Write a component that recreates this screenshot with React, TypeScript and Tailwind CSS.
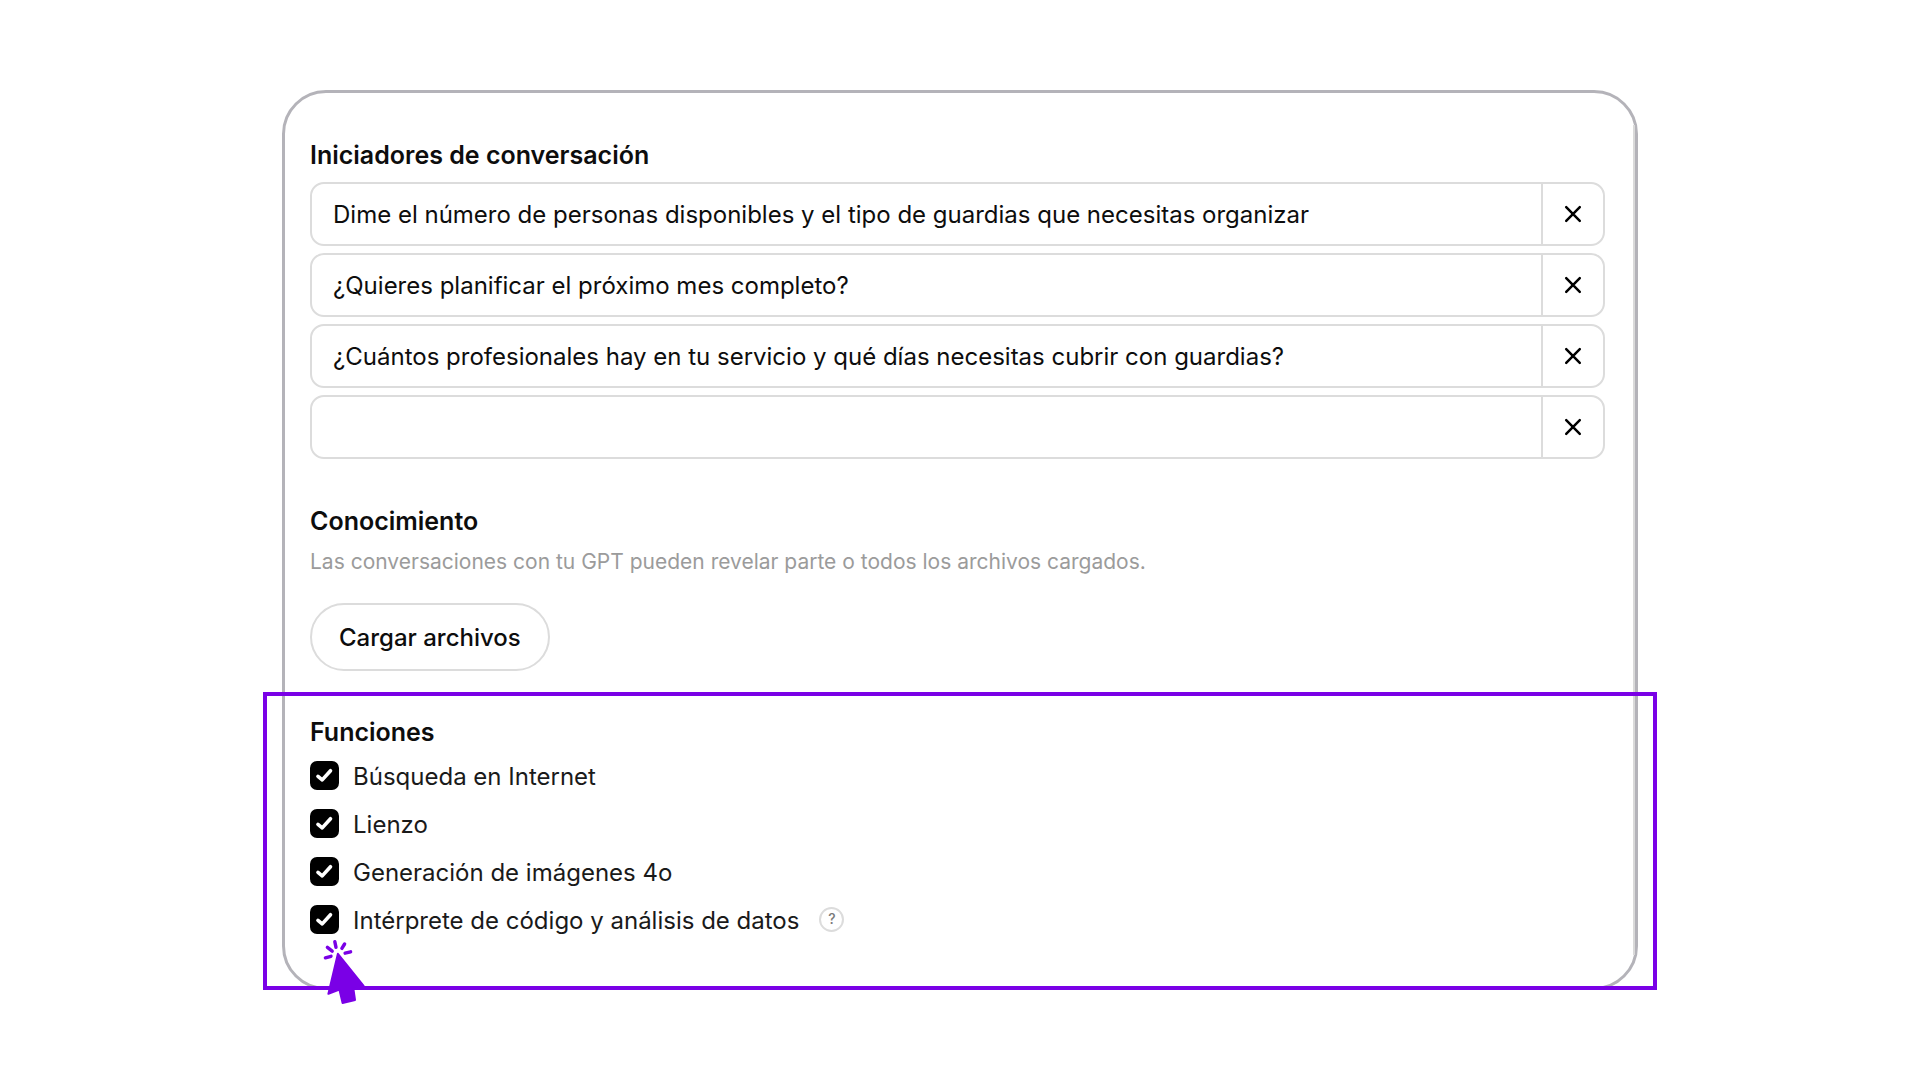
import { useState } from "react";

const initialStarters = [
  "Dime el número de personas disponibles y el tipo de guardias que necesitas organizar",
  "¿Quieres planificar el próximo mes completo?",
  "¿Cuántos profesionales hay en tu servicio y qué días necesitas cubrir con guardias?",
  "",
];

const features = [
  { id: "web", label: "Búsqueda en Internet" },
  { id: "canvas", label: "Lienzo" },
  { id: "images", label: "Generación de imágenes 4o" },
  { id: "code", label: "Intérprete de código y análisis de datos", help: true },
];

function CloseIcon() {
  return (
    <svg viewBox="0 0 18 18" className="size-[18px]" fill="none" stroke="currentColor" strokeWidth="2.5" strokeLinecap="round" aria-hidden="true">
      <path d="M2.2 2.2 15.8 15.8M15.8 2.2 2.2 15.8" />
    </svg>
  );
}

function ClickPointer() {
  return (
    <svg viewBox="0 0 50 72" className="pointer-events-none absolute top-[33px] left-2.5 z-20 h-[72px] w-[50px] text-[#7a00e6]" fill="currentColor" stroke="currentColor" strokeLinecap="round" strokeLinejoin="round" aria-hidden="true">
      <path strokeWidth="2" d="M17.9 17.8 43.6 49.8 33.4 53 35 64 22.6 67 19.4 53.6 8.4 57.8Z" />
      <path strokeWidth="3.4" fill="none" d="M5.4 21.8 11 20.3M7.4 11.4 12.2 15.2M14.8 5.6 16 11.4M24.6 8 21.9 12.4M25.1 17.2 30.6 15.8" />
    </svg>
  );
}

function Starter({ value, index, onChange, onRemove }: { value: string; index: number; onChange: (v: string) => void; onRemove: () => void }) {
  return (
    <li className="flex h-16 overflow-hidden rounded-[14px] border-2 border-[#dcdcdc]">
      <input
        type="text"
        aria-label={`Iniciador ${index + 1}`}
        value={value}
        onChange={(e) => onChange(e.target.value)}
        className="min-w-0 flex-1 bg-transparent px-[21px] pt-0.5 text-2xl text-[#0d0d0d] outline-none"
      />
      <button type="button" aria-label="Eliminar" onClick={onRemove} className="flex w-[62px] items-center justify-center border-l-2 border-[#dcdcdc] text-black">
        <CloseIcon />
      </button>
    </li>
  );
}

export default function App() {
  const [starters, setStarters] = useState(initialStarters);

  return (
    <div className="flex min-h-screen items-center justify-center bg-white font-['Inter',sans-serif] text-2xl text-[#0d0d0d]">
      <main className="relative w-full max-w-[1356px] rounded-[44px] border-3 border-[#b4b3b9] pt-[46px] pr-[30px] pb-[52px] pl-[25px]">
        <div className="absolute top-8 right-0 bottom-8 w-0.5 bg-[#dadada]" />

        <section>
          <h2 className="text-[25px] leading-8 font-semibold">Iniciadores de conversación</h2>
          <ul className="mt-[11px] flex flex-col gap-[7px]">
            {starters.map((value, i) => (
              <Starter
                key={i}
                index={i}
                value={value}
                onChange={(v) => setStarters(starters.map((s, j) => (j === i ? v : s)))}
                onRemove={() => setStarters(starters.filter((_, j) => j !== i))}
              />
            ))}
          </ul>
        </section>

        <section className="mt-[46px]">
          <h2 className="text-[25px] leading-8 font-semibold">Conocimiento</h2>
          <p className="mt-[11px] text-[21px] leading-7 text-[#9b9b9b]">Las conversaciones con tu GPT pueden revelar parte o todos los archivos cargados.</p>
          <button type="button" className="mt-[27px] flex h-[68px] items-center rounded-full border-2 border-[#dcdcdc] px-[27px] pt-0.5 font-medium">
            Cargar archivos
          </button>
        </section>

        <section className="relative mt-[45px]">
          <div className="pointer-events-none absolute -top-6 -right-[52px] -bottom-[55px] -left-[47px] z-10 border-4 border-[#7a00e6]" />
          <h2 className="text-[25px] leading-8 font-semibold">Funciones</h2>
          <ul className="mt-[11px] flex flex-col gap-4">
            {features.map((f) => (
              <li key={f.id} className="relative flex h-8 items-center">
                <span className="grid size-[29px] shrink-0 place-items-center">
                  <input id={f.id} type="checkbox" defaultChecked className="peer col-start-1 row-start-1 size-[29px] appearance-none rounded-[7px] border-2 border-black checked:bg-black" />
                  <svg viewBox="0 0 28 28" className="pointer-events-none invisible col-start-1 row-start-1 size-[29px] peer-checked:visible" fill="none" stroke="white" strokeWidth="3.5" strokeLinecap="round" strokeLinejoin="round" aria-hidden="true">
                    <path d="M7.7 14.8 11.8 18.2 19.8 9.4" />
                  </svg>
                </span>
                <label htmlFor={f.id} className="pt-[3px] pl-3.5 text-[#1a1a1a]">
                  {f.label}
                </label>
                {f.help && (
                  <>
                    <button type="button" aria-label="Más información" className="ml-5 flex size-[25px] items-center justify-center rounded-full border-2 border-[#dcdcdc] text-sm font-medium text-[#7a7a7a]">
                      ?
                    </button>
                    <ClickPointer />
                  </>
                )}
              </li>
            ))}
          </ul>
        </section>
      </main>
    </div>
  );
}
